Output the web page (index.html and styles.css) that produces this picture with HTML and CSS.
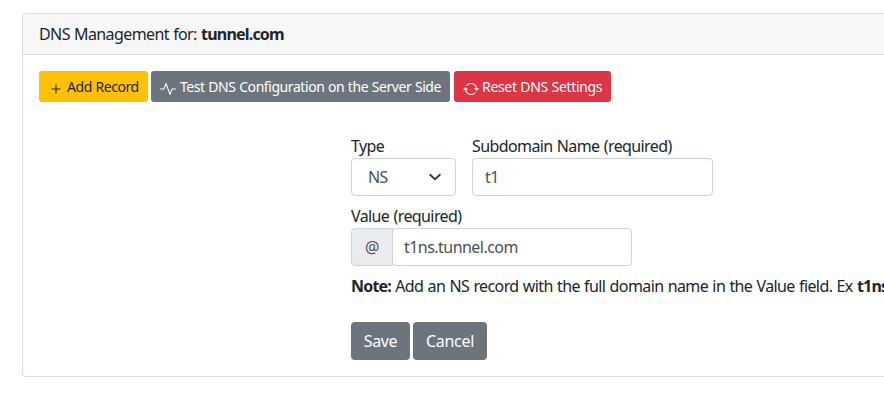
FILE: index.html
```html
<!DOCTYPE html>
<html lang="en">
<head>
<meta charset="utf-8">
<title>DNS Management</title>
<link rel="stylesheet" href="styles.css">
</head>
<body>
<main class="card">
  <header class="card-header">DNS Management for: <b>tunnel.com</b></header>
  <div class="card-body">
    <div class="toolbar">
      <button class="btn btn-sm btn-warning add"><svg width="16" height="16" viewBox="0 0 16 16" fill="none" stroke="currentColor" stroke-linecap="round"><path d="M8 4v8M4 8h8"/></svg><span>Add Record</span></button>
      <button class="btn btn-sm btn-secondary test"><svg width="16" height="16" viewBox="0 0 16 16" fill="currentColor"><path d="M6 2a.5.5 0 0 1 .47.33L10 12.040l1.530-4.210A.5.5 0 0 1 12 7.500h3.500a.5.5 0 0 1 0 1h-3.150l-1.880 5.170a.5.5 0 0 1-.94 0L6 3.960 4.470 8.170A.5.5 0 0 1 4 8.500H.5a.5.5 0 0 1 0-1h3.150l1.880-5.170A.5.5 0 0 1 6 2z"/></svg><span>Test DNS Configuration on the Server Side</span></button>
      <button class="btn btn-sm btn-danger reset"><svg width="16" height="16" viewBox="0 0 16 16" fill="currentColor"><path d="M11.534 7h3.932a.25.25 0 0 1 .192.41l-1.966 2.360a.25.25 0 0 1-.384 0l-1.966-2.360a.25.25 0 0 1 .192-.41zm-11 2h3.932a.25.25 0 0 0 .192-.41L2.692 6.230a.25.25 0 0 0-.384 0L.342 8.590A.25.25 0 0 0 .534 9z"/><path d="M8 3c-1.552 0-2.940.707-3.857 1.818a.5.5 0 1 1-.771-.636A6.002 6.002 0 0 1 13.917 7H12.900A5.002 5.002 0 0 0 8 3zM3.100 9a5.002 5.002 0 0 0 8.757 2.182.5.5 0 1 1 .771.636A6.002 6.002 0 0 1 2.083 9H3.100z"/></svg><span>Reset DNS Settings</span></button>
    </div>
    <form class="record-form">
      <div class="row">
        <div class="field type"><label>Type</label><div class="control select"><span>NS</span><svg width="12" height="12" viewBox="0 0 16 16" fill="none" stroke="#343a40" stroke-width="2.4" stroke-linecap="round" stroke-linejoin="round"><path d="m1.500 5 6.500 6 6.500-6"/></svg></div></div>
        <div class="field name"><label>Subdomain Name (required)</label><div class="control">t1</div></div>
      </div>
      <div class="field value"><label>Value (required)</label><div class="group"><span class="addon">@</span><div class="control">t1ns.tunnel.com</div></div></div>
      <p class="note"><b>Note:</b> Add an NS record with the full domain name in the Value field. Ex <b>t1ns</b></p>
      <div class="actions"><button type="button" class="btn btn-secondary save">Save</button><button type="button" class="btn btn-secondary cancel">Cancel</button></div>
    </form>
  </div>
</main>
</body>
</html>
```
FILE: styles.css
```css
* { box-sizing: border-box; }
body { margin: 0; padding: 13px 0 0 22px; overflow: hidden; background: #fff; color: #212529; font: 16px/24px "Noto Sans", sans-serif; letter-spacing: -.6px; word-spacing: .66px; }
b { letter-spacing: -.8px; }
.card { height: 364px; border: 1px solid #dfdfdf; border-right: 0; border-radius: 4px 0 0 4px; }
.card-header { height: 41px; padding: 8px 16px; background: #f7f7f7; border-bottom: 1px solid #dfdfdf; border-radius: 3px 0 0 0; }
.card-body { padding: 16px 0 16px 16px; }
.toolbar { display: flex; }
.btn { display: inline-flex; align-items: center; justify-content: center; height: 38px; padding: 0; border: 0; border-radius: 4px; font: 16px/24px "Noto Sans", sans-serif; letter-spacing: -.32px; color: #fff; white-space: nowrap; }
.btn-sm { justify-content: flex-start; height: 31px; padding: 0 9px; gap: 4px; border-radius: 3px; font-size: 14px; line-height: 21px; letter-spacing: -.43px; word-spacing: .38px; }
.btn-sm svg { flex: none; position: relative; top: 2px; }
.add { width: 109px; margin-right: 3px; }
.add svg { margin-right: -1px; }
.test { width: 299px; margin-right: 4px; }
.reset { width: 157px; gap: 3px; letter-spacing: -.33px; }
.btn-warning { background: #ffc107; color: #212529; }
.btn-secondary { background: #6c757d; }
.btn-danger { background: #dc3545; }
.record-form { margin: 32px 0 0 312px; }
.row { display: flex; gap: 16px; margin-bottom: 8px; }
.field label { display: block; }
.control { height: 38px; padding: 6px 12px; border: 1px solid #ced4da; border-radius: 4px; background: #fff; color: #495057; letter-spacing: -.54px; }
.type { width: 105px; }
.name { width: 241px; }
.value { width: 281px; }
.select { display: flex; align-items: center; justify-content: space-between; padding: 0 14px 0 16px; }
.group { display: flex; }
.group .control { flex: 1; padding-left: 11px; border-radius: 4px; }
.addon { width: 42px; margin-right: -1px; padding: 6px 0; border: 1px solid #ced4da; border-radius: 4px 0 0 4px; background: #e9ecef; color: #495057; text-align: center; }
.note { margin: 8px 0 24px; white-space: nowrap; }
.actions { display: flex; gap: 3px; }
.save { width: 59px; }
.cancel { width: 74px; }
```
